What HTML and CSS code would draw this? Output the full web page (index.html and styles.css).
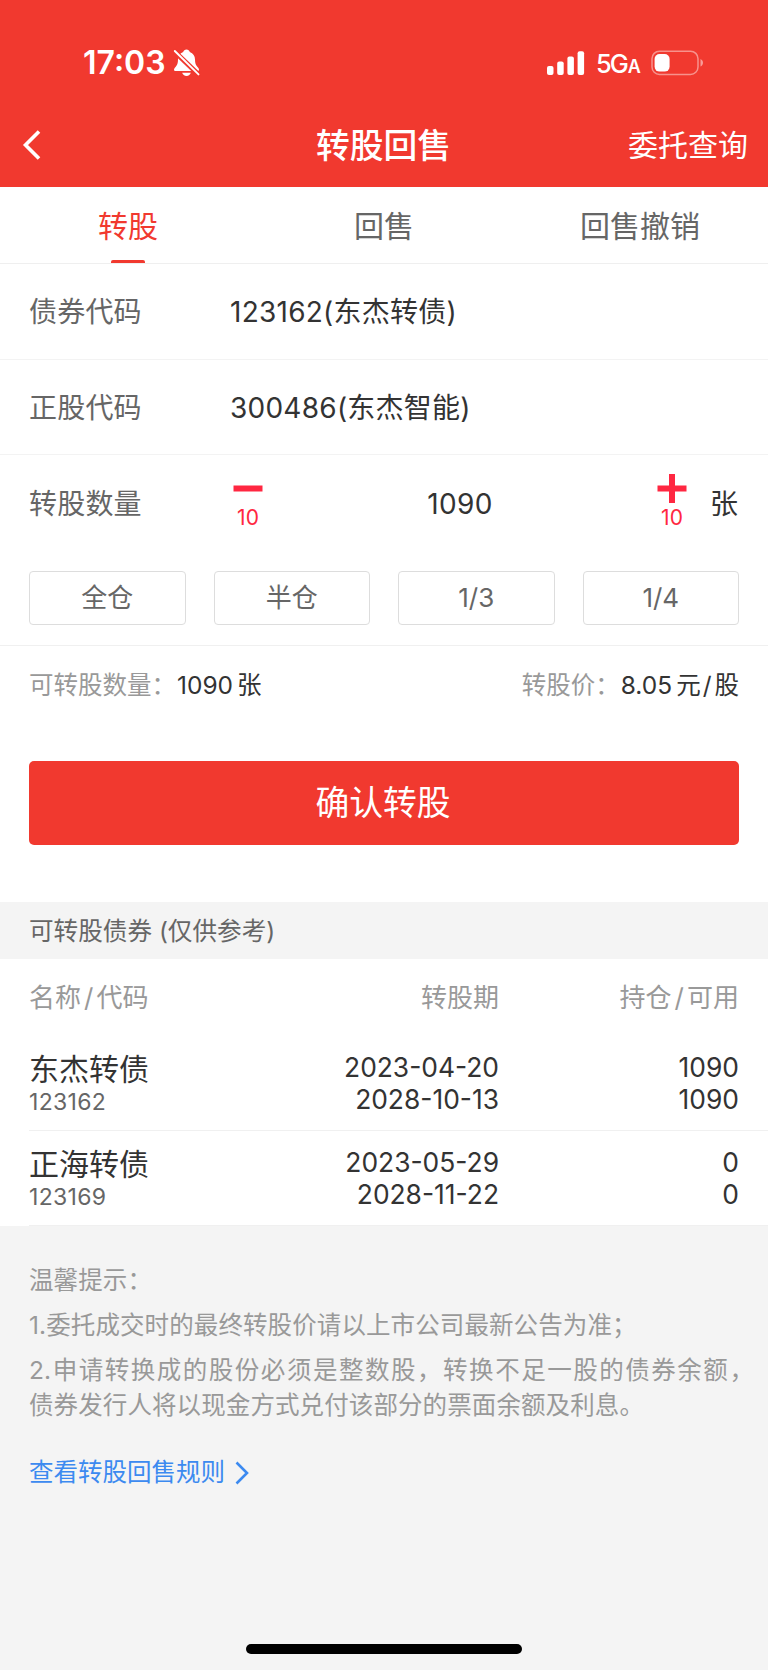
FILE: index.html
```html
<!DOCTYPE html>
<html lang="zh-CN">
<head>
  <meta charset="UTF-8" />
  <meta name="viewport" content="width=device-width, initial-scale=1.0"/>
  <title>转股回售</title>
  <link rel="stylesheet" href="styles.css">
</head>
<body>

  <header class="header">
    <div class="status">
      <div class="status-left">
        <span class="time">17:03</span>
        <svg class="bell" width="28" height="30" viewBox="0 0 28 30">
          <path d="M13.500 1.500c-1.600 0-2.900 1-3.300 2.400C6.800 5 5 8 5 11.500c0 4-.8 5.500-2.500 7.400-1 1.100-1.500 1.900-1.500 2.800 0 .9.700 1.300 1.600 1.300h21.800c.9 0 1.600-.4 1.600-1.300 0-.9-.5-1.700-1.500-2.800-1.700-1.900-2.500-3.400-2.500-7.400 0-3.500-1.800-6.500-5.200-7.600C16.400 2.500 15.100 1.500 13.500 1.500z" fill="#fff"/>
          <path d="M9.200 24.800h8.600c-.5 1.900-2.200 3.100-4.300 3.100s-3.800-1.200-4.300-3.100z" fill="#fff"/>
          <path d="M0 2L27 28" stroke="#f1392f" stroke-width="5"/>
          <path d="M1.800 3L25.500 26.400" stroke="#fff" stroke-width="1.900" stroke-linecap="round"/>
        </svg>
      </div>
      <div class="status-right">
        <svg width="38" height="24" viewBox="0 0 38 24" fill="#fff">
          <rect x="0" y="15" width="6.500" height="9" rx="2"/>
          <rect x="10.200" y="10.500" width="6.500" height="13.500" rx="2"/>
          <rect x="20.400" y="5.500" width="6.500" height="18.500" rx="2"/>
          <rect x="30.600" y="0.300" width="6.500" height="23.700" rx="2"/>
        </svg>
        <span class="network">5G<small>A</small></span>
        <svg width="53" height="26" viewBox="0 0 53 26">
          <rect x="1" y="1.200" width="46" height="23.200" rx="7.500" fill="none" stroke="#fff" stroke-opacity=".45" stroke-width="1.500"/>
          <rect x="3.600" y="4" width="15" height="17.600" rx="5" fill="#fff"/>
          <path d="M49.500 9v7.600c1.500-.7 2.500-2.100 2.500-3.800s-1-3.100-2.500-3.800z" fill="#fff" fill-opacity=".5"/>
        </svg>
      </div>
    </div>
    <nav class="navbar">
      <svg class="back" width="20" height="32" viewBox="0 0 20 32">
        <path d="M18 2.500L4.500 16 18 29.500" fill="none" stroke="#fff" stroke-width="3.600"/>
      </svg>
      <h1>转股回售</h1>
      <a class="query">委托查询</a>
    </nav>
  </header>

  <div class="tabs">
    <div class="tab active">转股</div>
    <div class="tab">回售</div>
    <div class="tab">回售撤销</div>
  </div>

  <div class="row">
    <span class="label">债券代码</span>
    <span class="value">123162(东杰转债)</span>
  </div>
  <div class="row">
    <span class="label">正股代码</span>
    <span class="value">300486(东杰智能)</span>
  </div>

  <div class="amount">
    <div class="amount-row">
      <span class="label">转股数量</span>
      <div class="stepper">
        <div class="step">
          <svg width="30" height="30" viewBox="0 0 30 30"><path d="M.5 14.500h29" stroke="#ff2741" stroke-width="6"/></svg>
          <span>10</span>
        </div>
        <span class="number">1090</span>
        <div class="step">
          <svg width="30" height="30" viewBox="0 0 30 30"><path d="M.5 14.500h29M15 0v29" stroke="#ff2741" stroke-width="6"/></svg>
          <span>10</span>
        </div>
      </div>
      <span class="unit">张</span>
    </div>
    <div class="shares">
      <div class="share">全仓</div>
      <div class="share">半仓</div>
      <div class="share">1/3</div>
      <div class="share">1/4</div>
    </div>
  </div>

  <div class="info">
    <div><span class="info-label">可转股数量：</span><b>1090</b><b class="gap">张</b></div>
    <div><span class="info-label">转股价：</span><b>8.05</b><b class="gap">元</b><b class="slash">/</b><b>股</b></div>
  </div>

  <div class="submit">确认转股</div>

  <div class="section-title">可转股债券 (仅供参考)</div>

  <div class="list">
    <div class="list-head">
      <span>名称<i>/</i>代码</span>
      <span>转股期</span>
      <span>持仓<i>/</i>可用</span>
    </div>
    <div class="item">
      <div class="name">东杰转债<small>123162</small></div>
      <div class="nums">2023-04-20<br>2028-10-13</div>
      <div class="nums">1090<br>1090</div>
    </div>
    <div class="item">
      <div class="name">正海转债<small>123169</small></div>
      <div class="nums">2023-05-29<br>2028-11-22</div>
      <div class="nums">0<br>0</div>
    </div>
  </div>

  <div class="tips">
    <p>温馨提示：</p>
    <p>1.委托成交时的最终转股价请以上市公司最新公告为准；</p>
    <p class="wide">2.申请转换成的股份必须是整数股，转换不足一股的债券余额，</p>
    <p class="last">债券发行人将以现金方式兑付该部分的票面余额及利息。</p>
    <a class="rules">查看转股回售规则
      <svg width="14" height="24" viewBox="0 0 14 24"><path d="M1.500 1.500L12 12 1.500 22.500" fill="none" stroke="#3c8af0" stroke-width="2.600"/></svg>
    </a>
  </div>

  <div class="footer">
    <div class="home-bar"></div>
  </div>

</body>
</html>
```
FILE: styles.css
```css
* {
  box-sizing: border-box;
}

body {
  margin: 0;
  width: 768px;
  height: 1670px;
  display: flex;
  flex-direction: column;
  overflow: hidden;
  background-color: #fff;
  color: #333;
  font-family: Inter, "Noto Sans CJK SC", sans-serif;
  font-size: 28px;
  white-space: nowrap;
}

svg {
  display: block;
  flex: none;
}

.header {
  height: 187px;
  background-color: #f1392f;
  color: #fff;
}

.status {
  height: 105px;
  padding: 20px 64px 0 83px;
  display: flex;
  justify-content: space-between;
  align-items: center;
}

.status-left,
.status-right {
  display: flex;
  align-items: center;
}

.time {
  width: 89px;
  font-size: 32px;
  font-weight: 600;
}

.bell {
  margin-left: 1px;
}

.network {
  flex: none;
  width: 66px;
  padding: 2px 0 0 11px;
  font-size: 25.500px;
  font-weight: 500;
  letter-spacing: -2px;
}

.network small {
  margin-left: 1px;
  font-size: 18px;
  font-weight: 600;
}

.navbar {
  height: 80px;
  padding: 0 20px 0 21px;
  display: grid;
  grid-template-columns: 1fr auto 1fr;
  align-items: center;
}

h1 {
  margin: 0;
  padding: 0 2px 4px 0;
  font-size: 33.800px;
  font-weight: 500;
}

.query {
  justify-self: end;
  padding-bottom: 4px;
  font-size: 30px;
}

.tabs {
  height: 77px;
  display: flex;
  border-bottom: 1px solid #efefef;
}

.tab {
  flex: 1;
  display: flex;
  flex-direction: column;
  align-items: center;
  padding-top: 6px;
  font-size: 30px;
  line-height: 67px;
  color: #666;
}

.active {
  color: #f1392f;
}

.active::after {
  content: "";
  width: 34px;
  height: 3px;
  border-radius: 2px 2px 0 0;
  background-color: #f1392f;
}

.row {
  height: 95.500px;
  padding: 0 0 2px 29px;
  display: flex;
  align-items: center;
  border-bottom: 1px solid #f3f3f3;
}

.label {
  width: 201px;
  color: #666;
  letter-spacing: 0.200px;
}

.value {
  letter-spacing: 0.250px;
}

.amount {
  height: 191px;
  padding: 0 29px;
  border-bottom: 1px solid #f0f0f0;
}

.amount-row {
  height: 95px;
  display: flex;
  align-items: center;
}

.amount-row .label,
.unit {
  padding-bottom: 2px;
}

.stepper {
  width: 461px;
  padding: 0 4px 0 3px;
  display: flex;
  justify-content: space-between;
  align-items: center;
}

.number {
  padding-top: 2px;
  letter-spacing: 0.300px;
}

.step {
  display: flex;
  flex-direction: column;
  align-items: center;
  color: #ff2741;
  font-size: 21px;
  line-height: 28px;
}

.unit {
  margin-left: 19px;
}

.shares {
  margin-top: 21px;
  display: grid;
  grid-template-columns: repeat(4, 1fr);
  gap: 28px;
}

.share {
  height: 54px;
  border: 1px solid #ddd;
  border-radius: 4px;
  text-align: center;
  font-size: 26px;
  line-height: 52px;
  color: #666;
}

.info {
  height: 79px;
  padding: 0 29px 4px;
  display: flex;
  justify-content: space-between;
  align-items: center;
  font-size: 24.500px;
}

.info b {
  font-weight: 400;
}

.info .gap {
  margin-left: 4px;
}

.info .slash {
  margin: 0 3px 0 2px;
}

.info-label {
  margin-right: 1px;
  color: #999;
}

.submit {
  height: 84px;
  margin: 36px 29px 57px;
  padding-right: 2px;
  border-radius: 5px;
  background-color: #f1392f;
  color: #fff;
  font-size: 33.800px;
  line-height: 84px;
  text-align: center;
}

.section-title {
  height: 57px;
  padding-left: 29px;
  background-color: #f4f4f4;
  color: #666;
  font-size: 24.600px;
  line-height: 59px;
}

.list {
  padding-left: 29px;
}

.list-head,
.item {
  display: grid;
  grid-template-columns: 270px 200px 240px;
}

.list-head {
  height: 77px;
  font-size: 26px;
  line-height: 78px;
  color: #999;
}

.list-head i {
  font-style: normal;
  margin: 0 3px;
}

.list-head span + span,
.nums {
  text-align: right;
}

.item {
  height: 95px;
  padding-top: 15px;
  border-bottom: 1px solid #f0f0f0;
}

.name {
  font-size: 30px;
  line-height: 36px;
}

.name small {
  display: block;
  font-size: 23px;
  line-height: 30px;
  letter-spacing: 0.300px;
  color: #666;
}

.nums {
  font-size: 26.400px;
  line-height: 32px;
}

.tips {
  flex: 1;
  padding: 32px 29px 0;
  background-color: #f4f4f4;
  color: #999;
  font-size: 24.500px;
  line-height: 45px;
}

.tips p {
  margin: 0;
  letter-spacing: 0.100px;
}

.tips .wide {
  width: 725px;
  text-align-last: justify;
}

.tips .last {
  line-height: 25px;
}

.rules {
  margin-top: 32px;
  display: flex;
  align-items: center;
  gap: 10px;
  color: #3c8af0;
}

.footer {
  height: 26px;
  background-color: #f4f4f4;
}

.home-bar {
  width: 276px;
  height: 10px;
  margin: 0 auto;
  border-radius: 5px;
  background-color: #000;
}
```
